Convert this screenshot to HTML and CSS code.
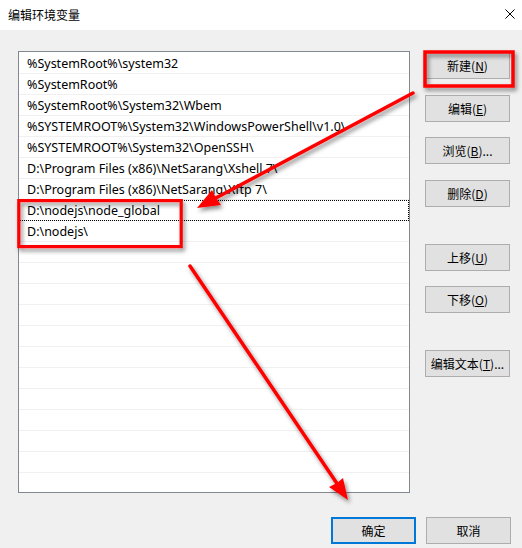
FILE: index.html
```html
<!DOCTYPE html>
<html lang="zh-CN">
<head>
<meta charset="utf-8">
<title>编辑环境变量</title>
<link rel="stylesheet" href="styles.css">
</head>
<body>
<div class="window">
  <div class="titlebar">
    <span class="title">编辑环境变量</span>
    <svg class="close" width="10" height="10" viewBox="0 0 10 10"><path d="M0.5 0.5 L9.5 9.5 M9.5 0.5 L0.5 9.5" stroke="#000" stroke-width="1" fill="none"/></svg>
  </div>
  <div class="body">
    <div class="main">
      <div class="list">
        <div class="row">%SystemRoot%\system32</div>
        <div class="row">%SystemRoot%</div>
        <div class="row">%SystemRoot%\System32\Wbem</div>
        <div class="row">%SYSTEMROOT%\System32\WindowsPowerShell\v1.0\</div>
        <div class="row">%SYSTEMROOT%\System32\OpenSSH\</div>
        <div class="row">D:\Program Files (x86)\NetSarang\Xshell 7\</div>
        <div class="row">D:\Program Files (x86)\NetSarang\Xftp 7\</div>
        <div class="row focus">D:\nodejs\node_global</div>
        <div class="row">D:\nodejs\</div>
        <div class="row"></div>
        <div class="row"></div>
        <div class="row"></div>
        <div class="row"></div>
        <div class="row"></div>
        <div class="row"></div>
        <div class="row"></div>
        <div class="row"></div>
        <div class="row"></div>
        <div class="row"></div>
        <div class="row"></div>
      </div>
      <div class="side">
        <button class="btn b-new">新建(<u>N</u>)</button>
        <button class="btn b-edit">编辑(<u>E</u>)</button>
        <button class="btn b-browse">浏览(<u>B</u>)...</button>
        <button class="btn b-del">删除(<u>D</u>)</button>
        <button class="btn b-up">上移(<u>U</u>)</button>
        <button class="btn b-down">下移(<u>O</u>)</button>
        <button class="btn b-text">编辑文本(<u>T</u>)...</button>
      </div>
    </div>
    <div class="footer">
      <button class="btn default">确定</button>
      <button class="btn">取消</button>
    </div>
  </div>
  <svg class="annot" width="522" height="548" viewBox="0 0 522 548">
    <defs>
      <filter id="sh" x="-20%" y="-20%" width="140%" height="140%">
        <feDropShadow dx="2" dy="3" stdDeviation="2" flood-color="#000" flood-opacity="0.45"/>
      </filter>
    </defs>
    <g filter="url(#sh)">
      <rect x="425" y="52" width="88" height="34" fill="none" stroke="#f00" stroke-width="3.5"/>
      <rect x="18.8" y="200.6" width="162.4" height="46" fill="none" stroke="#f00" stroke-width="3.2"/>
      <line x1="413" y1="93" x2="214" y2="199" stroke="#f00" stroke-width="3.5" stroke-linecap="round"/>
      <polygon points="197,208 221,205 216,198 212,190" fill="#f00"/>
      <line x1="190" y1="266" x2="338" y2="485" stroke="#f00" stroke-width="3.5" stroke-linecap="round"/>
      <polygon points="348,500 329,487 337,483 343,478" fill="#f00"/>
    </g>
  </svg>
</div>
</body>
</html>
```

FILE: styles.css
```css
* { box-sizing: border-box; }
html, body { margin: 0; padding: 0; }
body {
  font-family: "Noto Sans", "Noto Sans CJK SC", sans-serif;
  font-size: 12.5px;
  color: #000;
  background: #f0f0f0;
}
.window {
  position: relative;
  width: 522px;
  height: 548px;
  overflow: hidden;
  background: #f0f0f0;
}
.titlebar {
  height: 30px;
  background: #fff;
  display: flex;
  align-items: center;
  justify-content: space-between;
  padding: 0 7px 1px 8px;
}
.title {
  font-family: "Noto Sans CJK SC", sans-serif;
  font-size: 12px;
}
.close { display: block; margin-bottom: 1px; }
.body {
  padding: 21px 0 0 18px;
}
.main {
  display: flex;
  align-items: flex-start;
}
.list {
  width: 392px;
  height: 442px;
  border: 1px solid #828790;
  background: #fff;
  padding-top: 1px;
  overflow: hidden;
}
.row {
  height: 21px;
  line-height: 21px;
  border-bottom: 1px solid #f0f0f0;
  padding-left: 8px;
  white-space: nowrap;
}
.row.focus {
  outline: 1px dotted #000;
  outline-offset: -1px;
}
.side {
  display: flex;
  flex-direction: column;
  margin-left: 15px;
  padding-top: 1px;
}
.btn {
  width: 85px;
  height: 27px;
  background: #e1e1e1;
  border: 1px solid #adadad;
  font-family: "Noto Sans CJK SC", sans-serif;
  font-size: 12px;
  color: #000;
  padding: 0;
  margin: 0;
  border-radius: 0;
}
.btn u { text-underline-offset: 1px; }
.b-edit { margin-top: 16px; }
.b-browse { margin-top: 15px; }
.b-del { margin-top: 16px; }
.b-up { margin-top: 37px; }
.b-down { margin-top: 15px; }
.b-text { margin-top: 37px; }
.footer {
  display: flex;
  justify-content: flex-end;
  gap: 10px;
  padding: 24px 11px 0 0;
}
.btn.default {
  border: 2px solid #0078d7;
}
.annot {
  position: absolute;
  left: 0;
  top: 0;
  pointer-events: none;
}
```
